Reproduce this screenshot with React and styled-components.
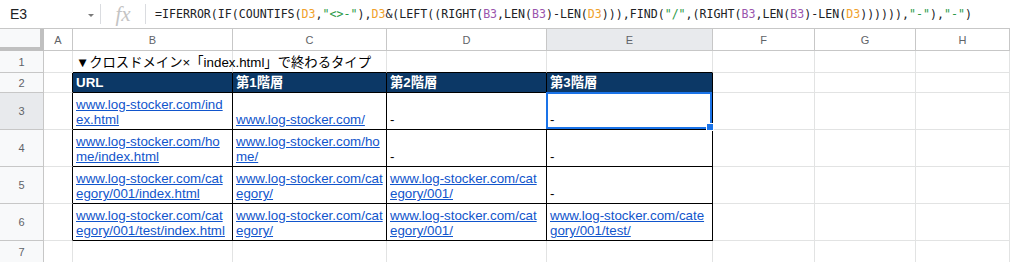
import styled, { createGlobalStyle } from "styled-components";

const GlobalStyle = createGlobalStyle`
  html, body { margin: 0; padding: 0; background: #fff; }
  body { font-family: "Liberation Sans", Arial, sans-serif; }
`;

const formula = [
  ["=IFERROR(IF(COUNTIFS("], ["D3", "d"], [","], ['"<>-"', "s"], ["),"], ["D3", "d"],
  ["&(LEFT((RIGHT("], ["B3", "b"], [",LEN("], ["B3", "b"], [")-LEN("], ["D3", "d"],
  ["))),FIND("], ['"/"', "s"], [",(RIGHT("], ["B3", "b"], [",LEN("], ["B3", "b"],
  [")-LEN("], ["D3", "d"], ["))))))"], [","], ['"-"', "s"], ["),"], ['"-"', "s"], [")"],
];

const tokenColor = { d: "#f0a12c", b: "#9a55ad", s: "#2b9a47" };

const colLetters = ["A", "B", "C", "D", "E", "F", "G", "H"];
const colWidths = "44px 29px 160px 154px 160px 166px 102px 101px 1fr";

const title = "▼クロスドメイン×「index.html」で終わるタイプ";
const heads = ["URL", "第1階層", "第2階層", "第3階層"];
const body = [
  [["www.log-stocker.com/ind", "ex.html"], ["www.log-stocker.com/"], "-", "-"],
  [["www.log-stocker.com/ho", "me/index.html"], ["www.log-stocker.com/ho", "me/"], "-", "-"],
  [
    ["www.log-stocker.com/cat", "egory/001/index.html"],
    ["www.log-stocker.com/cat", "egory/"],
    ["www.log-stocker.com/cat", "egory/001/"],
    "-",
  ],
  [
    ["www.log-stocker.com/cat", "egory/001/test/index.html"],
    ["www.log-stocker.com/cat", "egory/"],
    ["www.log-stocker.com/cat", "egory/001/"],
    ["www.log-stocker.com/cate", "gory/001/test/"],
  ],
];

const Page = styled.div`
  width: 1010px;
  height: 262px;
  overflow: hidden;
  background: #fff;
`;

const FormulaBar = styled.div`
  display: flex;
  align-items: center;
  height: 28px;
  border-bottom: 1px solid #c7c7c7;
`;

const NameBox = styled.div`
  box-sizing: border-box;
  width: 100px;
  display: flex;
  align-items: center;
  justify-content: space-between;
  padding: 0 6px 0 10px;
  font-size: 14px;
  color: #202124;
`;

const Caret = styled.span`
  width: 0;
  height: 0;
  border-left: 3px solid transparent;
  border-right: 3px solid transparent;
  border-top: 3px solid #7a7a7a;
  margin-top: 2px;
`;

const Divider = styled.div`
  width: 1px;
  height: 20px;
  background: #dadce0;
`;

const Fx = styled.div`
  width: 44px;
  text-align: center;
  font-family: "Liberation Serif", serif;
  font-style: italic;
  font-size: 21px;
  color: #c4c4c4;
  line-height: 28px;
`;

const FormulaText = styled.div`
  padding-left: 9px;
  font-family: "DejaVu Sans Mono", monospace;
  font-size: 11.6px;
  color: #202124;
  white-space: nowrap;
`;

const Token = styled.span`
  color: ${(p) => p.$c || "#202124"};
`;

const Grid = styled.div`
  display: grid;
  grid-template-columns: ${colWidths};
  grid-template-rows: 22px 22px 20px 37px 37px 37px 37px 22px;
`;

const Corner = styled.div`
  background: #f8f9fa;
  border-right: 4px solid #c0c0c0;
  border-bottom: 4px solid #c0c0c0;
`;

const ColHead = styled.div`
  display: flex;
  align-items: center;
  justify-content: center;
  font-size: 11px;
  color: #5f6368;
  background: ${(p) => (p.$active ? "#e8eaed" : "#fff")};
  border-right: 1px solid #c7c7c7;
  border-bottom: 1px solid #c7c7c7;
`;

const RowHead = styled.div`
  display: flex;
  align-items: center;
  justify-content: center;
  font-size: 11px;
  color: #5f6368;
  background: ${(p) => (p.$active ? "#e8eaed" : "#f8f9fa")};
  border-right: 1px solid #c7c7c7;
  border-bottom: 1px solid #c7c7c7;
`;

const Cell = styled.div`
  position: relative;
  display: flex;
  align-items: flex-end;
  padding: 0 3px 2px;
  font-size: 13.33px;
  line-height: 15px;
  white-space: nowrap;
  color: ${(p) => (p.$head ? "#fff" : "#000")};
  font-weight: ${(p) => (p.$head ? "bold" : "normal")};
  background: ${(p) => (p.$head ? "#0c3866" : "transparent")};
  border-right: 1px solid ${(p) => (p.$rb ? "#000" : "#e2e3e3")};
  border-bottom: 1px solid ${(p) => (p.$bb ? "#000" : "#e2e3e3")};
  font-family: "Liberation Sans", Arial, "Noto Sans CJK JP", sans-serif;
  z-index: ${(p) => (p.$sel ? 2 : "auto")};
`;

const Link = styled.span`
  color: #1155cc;
  text-decoration: underline;
`;

const Selection = styled.div`
  position: absolute;
  top: -1px;
  left: -1px;
  right: 0;
  bottom: 0;
  border: 2px solid #1a73e8;
  pointer-events: none;
`;

const Handle = styled.div`
  position: absolute;
  right: -4px;
  bottom: -4px;
  width: 6px;
  height: 6px;
  background: #1a73e8;
  border: 1px solid #fff;
`;

function CellText({ value }) {
  if (Array.isArray(value)) {
    return (
      <Link>
        {value.map((line, i) => (
          <span key={i}>
            {i > 0 && <br />}
            {line}
          </span>
        ))}
      </Link>
    );
  }
  return value;
}

export default function App() {
  const rows = [];

  // row 1: title
  rows.push(
    <RowHead key="h1">1</RowHead>,
    <Cell key="a1" />,
    <Cell key="b1" $bb>
      <span>{title}</span>
    </Cell>,
    <Cell key="c1" $bb />,
    <Cell key="d1" $bb />,
    <Cell key="e1" $bb />,
    <Cell key="f1" />,
    <Cell key="g1" />,
    <Cell key="h1c" />
  );

  // row 2: table header
  rows.push(
    <RowHead key="h2">2</RowHead>,
    <Cell key="a2" $rb />,
    ...heads.map((h, i) => (
      <Cell key={"hd" + i} $head $rb $bb>
        {h}
      </Cell>
    )),
    <Cell key="f2" />,
    <Cell key="g2" />,
    <Cell key="h2c" />
  );

  // rows 3-6
  body.forEach((r, ri) => {
    const n = ri + 3;
    rows.push(
      <RowHead key={"h" + n} $active={n === 3}>
        {n}
      </RowHead>,
      <Cell key={"a" + n} $rb />,
      ...r.map((v, ci) => {
        const sel = n === 3 && ci === 3;
        return (
          <Cell key={n + "-" + ci} $rb $bb $sel={sel}>
            <span>
              <CellText value={v} />
            </span>
            {sel && (
              <Selection>
                <Handle />
              </Selection>
            )}
          </Cell>
        );
      }),
      <Cell key={"f" + n} />,
      <Cell key={"g" + n} />,
      <Cell key={"hc" + n} />
    );
  });

  // row 7
  rows.push(
    <RowHead key="h7">7</RowHead>,
    ...colLetters.map((c) => <Cell key={"r7" + c} />)
  );

  return (
    <Page>
      <GlobalStyle />
      <FormulaBar>
        <NameBox>
          E3
          <Caret />
        </NameBox>
        <Divider />
        <Fx>fx</Fx>
        <Divider />
        <FormulaText>
          {formula.map(([t, k], i) => (
            <Token key={i} $c={tokenColor[k]}>
              {t}
            </Token>
          ))}
        </FormulaText>
      </FormulaBar>
      <Grid>
        <Corner />
        {colLetters.map((c) => (
          <ColHead key={c} $active={c === "E"}>
            {c}
          </ColHead>
        ))}
        {rows}
      </Grid>
    </Page>
  );
}
